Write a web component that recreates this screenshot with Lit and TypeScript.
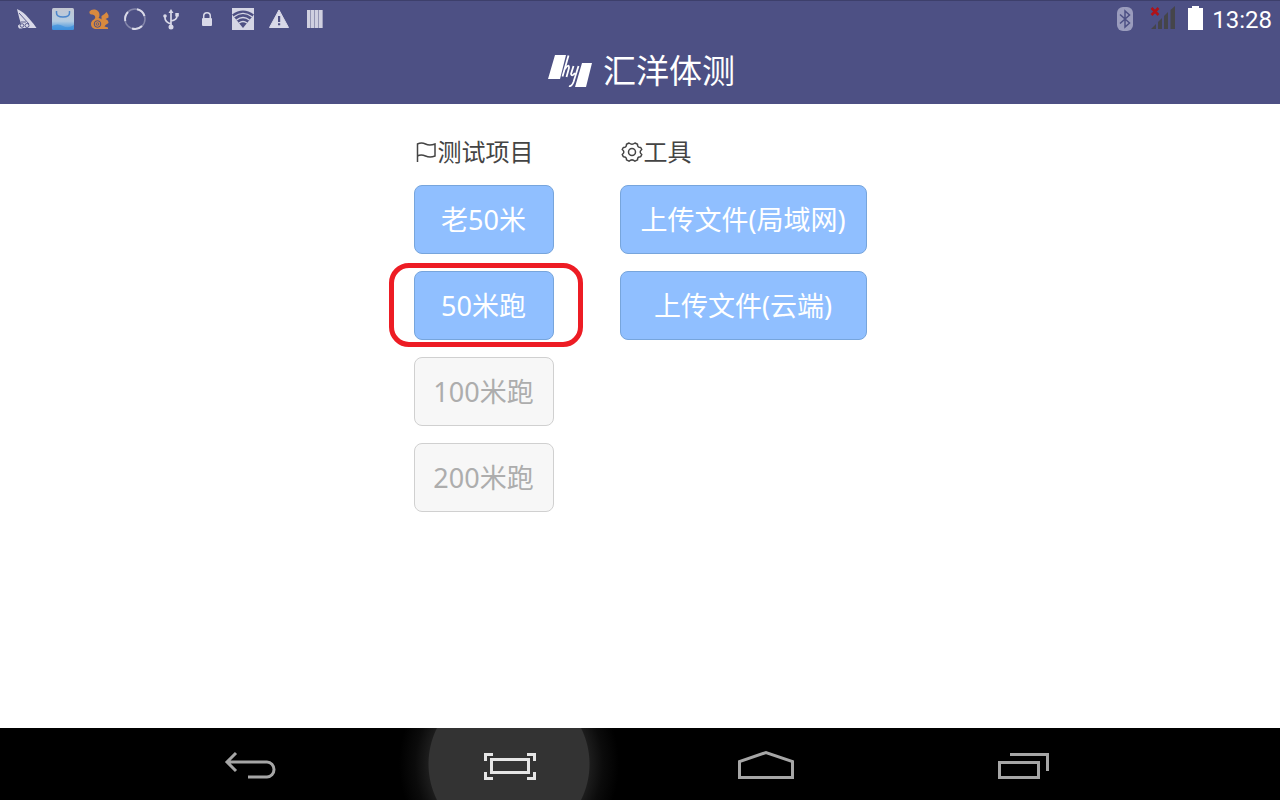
import { LitElement, html, css, svg } from "lit";
import { customElement } from "lit/decorators.js";

const statusIcons = [
  // sailing boat
  svg`<path fill="#d9d9e8" d="M2 2Q9 5 14 11.500 19 17 21.500 21H8Q3 23 3 18.500L6 16.500 4.500 12Z"/><g fill="none" stroke="#4e5084" stroke-width=".9"><circle cx="7" cy="18.500" r="1.800"/><circle cx="12" cy="18.500" r="2"/><path d="M4 6l10 11M6 15h5"/></g>`,
  // shopping bag
  svg`<defs><linearGradient id="bag" x1="0" y1="0" x2="0" y2="1"><stop offset="0" stop-color="#c3c6d2"/><stop offset=".6" stop-color="#b3cce2"/><stop offset="1" stop-color="#3a8fdd"/></linearGradient></defs><rect x="1" y="1" width="22" height="22" rx="1.500" fill="url(#bag)"/><path d="M1 19q6-3 11 0t11-1v3q0 2-2 2H3q-2 0-2-2z" fill="#3f92de" opacity=".7"/><path d="M5.500 4v2q0 4 6.500 4t6.500-4V4" fill="none" stroke="#4b86cc" stroke-width="1.500"/>`,
  // squirrel
  svg`<path fill="#d98a3e" d="M2.500 4.500Q4 2 8 2.500q4.500 1 4.500 5.500 0 2-1 3 2 0 3 1.500V9l3-2 2-2 1 1.500Q22 8 21.500 10.500l-3 1.500q3 1 3 4l-3 2-1 1.500 3.500 1V22H8q-4-1-4-5 0-3 3-4.500 2-1.500 1-3.500Q6.500 7 4.500 7.500 2 7 2.500 4.500z"/><circle cx="10.500" cy="17" r="3.300" fill="none" stroke="#4e5084" stroke-width="1"/><circle cx="10.500" cy="17" r="1.300" fill="none" stroke="#4e5084" stroke-width=".8"/>`,
  // sync ring
  svg`<circle cx="12" cy="12" r="10" fill="none" stroke="#8587ab" stroke-width="1.500"/><g fill="none" stroke="#dadae8" stroke-width="2"><path d="M14 2.200A10 10 0 0 1 21.500 9"/><path d="M2.300 14A10 10 0 0 1 5 5"/><path d="M19 19A10 10 0 0 1 9 21.500"/></g>`,
  // usb
  svg`<g stroke="#d9d9e8" stroke-width="1.700" fill="none"><path d="M12 4v16M12 17q-6-2-6-6v-1M12 14q6-1 6-5V7"/></g><g fill="#d9d9e8"><path d="M12 2l2.500 4h-5z"/><circle cx="12" cy="20" r="2.500"/><circle cx="6" cy="9" r="1.800"/><rect x="16.300" y="6" width="3.500" height="3.500"/></g>`,
  // padlock
  svg`<rect x="7" y="11" width="10" height="8" rx="1" fill="#d9d9e8"/><path d="M8.700 11V9a3.300 3.300 0 0 1 6.600 0v2" fill="none" stroke="#d9d9e8" stroke-width="1.500"/>`,
  // wifi tile
  svg`<rect x="1" y="1" width="22" height="22" fill="#d5d6e5"/><path d="M1 7.500q11-8 22 0L12 21z" fill="#4e5084"/><g fill="none" stroke="#d5d6e5" stroke-width="1.300"><path d="M3 9.800q9-7 18 0M5.500 13q6.500-5 13 0M8 16q4-3 8 0"/></g>`,
  // warning triangle
  svg`<path d="M12 3l9.500 17.500h-19z" fill="#d9d9e8" stroke="#d9d9e8" stroke-linejoin="round" stroke-width="1"/><path d="M11 9h2.200v6H11zm0 7.200h2.200v2H11z" fill="#4e5084"/>`,
  // barcode
  svg`<g fill="#d0d0e0"><rect x="4" y="3" width="15.500" height="18" fill="#9495b3"/><rect x="4" y="3" width="3" height="18"/><rect x="8" y="3" width="3" height="18"/><rect x="12" y="3" width="3" height="18"/><rect x="16" y="3" width="3.500" height="18"/></g>`,
];

const navItems = [
  { label: "返回", active: false, icon: svg`<g fill="none" stroke="#a6a6a6" stroke-width="3"><path d="M6 18H46a7 7.500 0 0 1 0 15H27M15 9L6 18l9 9"/></g>` },
  { label: "截屏", active: true, icon: svg`<g fill="none" stroke="#e6e6e6" stroke-width="3"><rect x="12.500" y="15.500" width="37" height="13"/><path d="M6.500 17v-6.500h7.500M48 10.500h7.500V17M55.500 28v6.500H48M14 34.500H6.500V28"/></g>` },
  { label: "主屏幕", active: false, icon: svg`<path d="M2.500 33.500V17.500L29 8.500 55.500 17.500v16z" fill="none" stroke="#a6a6a6" stroke-width="3"/>` },
  { label: "最近任务", active: false, icon: svg`<g fill="none" stroke="#a6a6a6" stroke-width="3"><rect x="4.500" y="18.500" width="39" height="15"/><path d="M15 10.500h37.500V27"/></g>` },
];

@customElement("app-root")
export class AppRoot extends LitElement {
  static styles = css`
    :host {
      display: flex;
      flex-direction: column;
      min-height: 100vh;
      background: #fff;
      font-family: "Noto Sans", "Noto Sans CJK SC", sans-serif;
    }
    svg { display: block; flex: none; }
    .top { background: #4d5084; color: #fff; }
    .status {
      display: flex;
      align-items: center;
      justify-content: space-between;
      height: 38px;
      padding: 0 8px 0 15px;
      box-shadow: inset 0 1px #3d3f6b;
      box-sizing: border-box;
    }
    .icons { display: flex; gap: 12px; }
    .system { display: flex; align-items: center; }
    .clock { font: 24px/38px Roboto, sans-serif; margin-left: 6px; padding-top: 2px; }
    .brand {
      display: flex;
      align-items: center;
      justify-content: center;
      gap: 10px;
      height: 66px;
      margin: 0;
      padding-left: 2px;
      font-size: 33px;
      line-height: 48px;
      font-weight: 400;
    }
    main {
      flex: 1;
      display: flex;
      justify-content: center;
      align-items: flex-start;
      gap: 66px;
      padding-top: 32px;
    }
    .column { display: grid; gap: 17px; width: 140px; }
    .wide { width: 247px; }
    h2 {
      display: flex;
      align-items: center;
      height: 32px;
      margin: 0;
      font-size: 24px;
      line-height: 32px;
      font-weight: 400;
      color: #444;
      white-space: nowrap;
    }
    .slot { position: relative; display: grid; }
    .marked::after {
      content: "";
      position: absolute;
      inset: -8px -29px -7px -25px;
      border: 5px solid #ed1c24;
      border-radius: 20px;
      pointer-events: none;
    }
    .action {
      height: 69px;
      padding: 0 0 2px;
      border: 1px solid #77a5dc;
      border-radius: 8px;
      background: #90bfff;
      color: #fff;
      font-family: inherit;
      font-size: 27px;
      white-space: nowrap;
    }
    .action:disabled { background: #f7f7f7; border-color: #d0d0d0; color: #adadad; }
    nav {
      display: flex;
      justify-content: center;
      height: 72px;
      padding-right: 4px;
      background: #000;
      overflow: hidden;
    }
    .key {
      display: grid;
      place-items: center;
      width: 258px;
      padding: 0;
      border: 0;
      background: none;
    }
    .pressed {
      background: radial-gradient(circle at 50% 50%, #333 0 80px, #1c1c1c 81px, #0b0b0b 94px, #000 110px);
    }
  `;

  private entry(text: string, disabled = false, marked = false) {
    return html`<div class="slot ${marked ? "marked" : ""}">
      <button class="action" ?disabled=${disabled}>${text}</button>
    </div>`;
  }

  render() {
    return html`
      <header class="top">
        <div class="status">
          <div class="icons">
            ${statusIcons.map((i) => html`<svg width="24" height="24" viewBox="0 0 24 24">${i}</svg>`)}
          </div>
          <div class="system">
            <svg width="90" height="26" viewBox="0 0 90 26">
              <rect x="1" y="1" width="16" height="24" rx="6" fill="#9a9cbd" />
              <path d="M4 8.500l9.500 8.500-4.500 4V5l4.500 4L4 17.500" fill="none" stroke="#4d5084" stroke-width="1.500" />
              <path d="M35 23l5-5v5zM42 16l4-4v11h-4zM48 10l4-4v17h-4zM54.500 4L59 0v23h-4.500z" fill="#45454a" />
              <path d="M35.500 2l7 7m0-7l-7 7" stroke="#b01218" stroke-width="2.500" />
              <path d="M76 0h7v2h4v22H72V2h4z" fill="#fff" />
            </svg>
            <time class="clock">13:28</time>
          </div>
        </div>
        <h1 class="brand">
          <svg width="46" height="38" viewBox="0 0 46 38">
            <path d="M8 3h11l-6 24H1z M35 11h10l-6 24H28z" fill="#fff" />
            <path d="M21.500 3.500l-6 21M18 17q4-6 4-1l-2.500 9M26.500 14l-2.500 8q1 3 4-1M31.500 14l-5 16q-2 5-4.500 4" fill="none" stroke="#fff" stroke-width="1.800" />
          </svg>
          <span>汇洋体测</span>
        </h1>
      </header>
      <main>
        <section class="column">
          <h2>
            <svg width="24" height="24" viewBox="0 0 24 24"><path d="M3.500 22V4q4-2 8 0t9.500 0v12q-5 2-9.500 0t-8 0" fill="none" stroke="#444" stroke-width="1.500" /></svg>
            <span>测试项目</span>
          </h2>
          ${this.entry("老50米")} ${this.entry("50米跑", false, true)}
          ${this.entry("100米跑", true)} ${this.entry("200米跑", true)}
        </section>
        <section class="column wide">
          <h2>
            <svg width="24" height="24" viewBox="0 0 24 24"><g fill="none" stroke="#444" stroke-width="1.500" stroke-linejoin="round"><path d="M9 3q3 2.500 6 0l2.500 1.200q-.2 3.300 3.200 3.300L21.800 9.500q-3.300 2.500 0 5l-1.100 2.200q-3.300-.2-3.200 3.200L15 21.200q-3-2.700-6 0l-2.500-1.300q.2-3.300-3.200-3.200L2.200 14.500q3.300-2.500 0-5l1.100-2q3.300.1 3.200-3.300z"/><circle cx="12" cy="12" r="3.500"/></g></svg>
            <span>工具</span>
          </h2>
          ${this.entry("上传文件(局域网)")} ${this.entry("上传文件(云端)")}
        </section>
      </main>
      <nav>
        ${navItems.map(
          (n) => html`<button class="key ${n.active ? "pressed" : ""}" aria-label=${n.label}>
            <svg width="60" height="40" viewBox="0 0 60 40">${n.icon}</svg>
          </button>`
        )}
      </nav>
    `;
  }
}
